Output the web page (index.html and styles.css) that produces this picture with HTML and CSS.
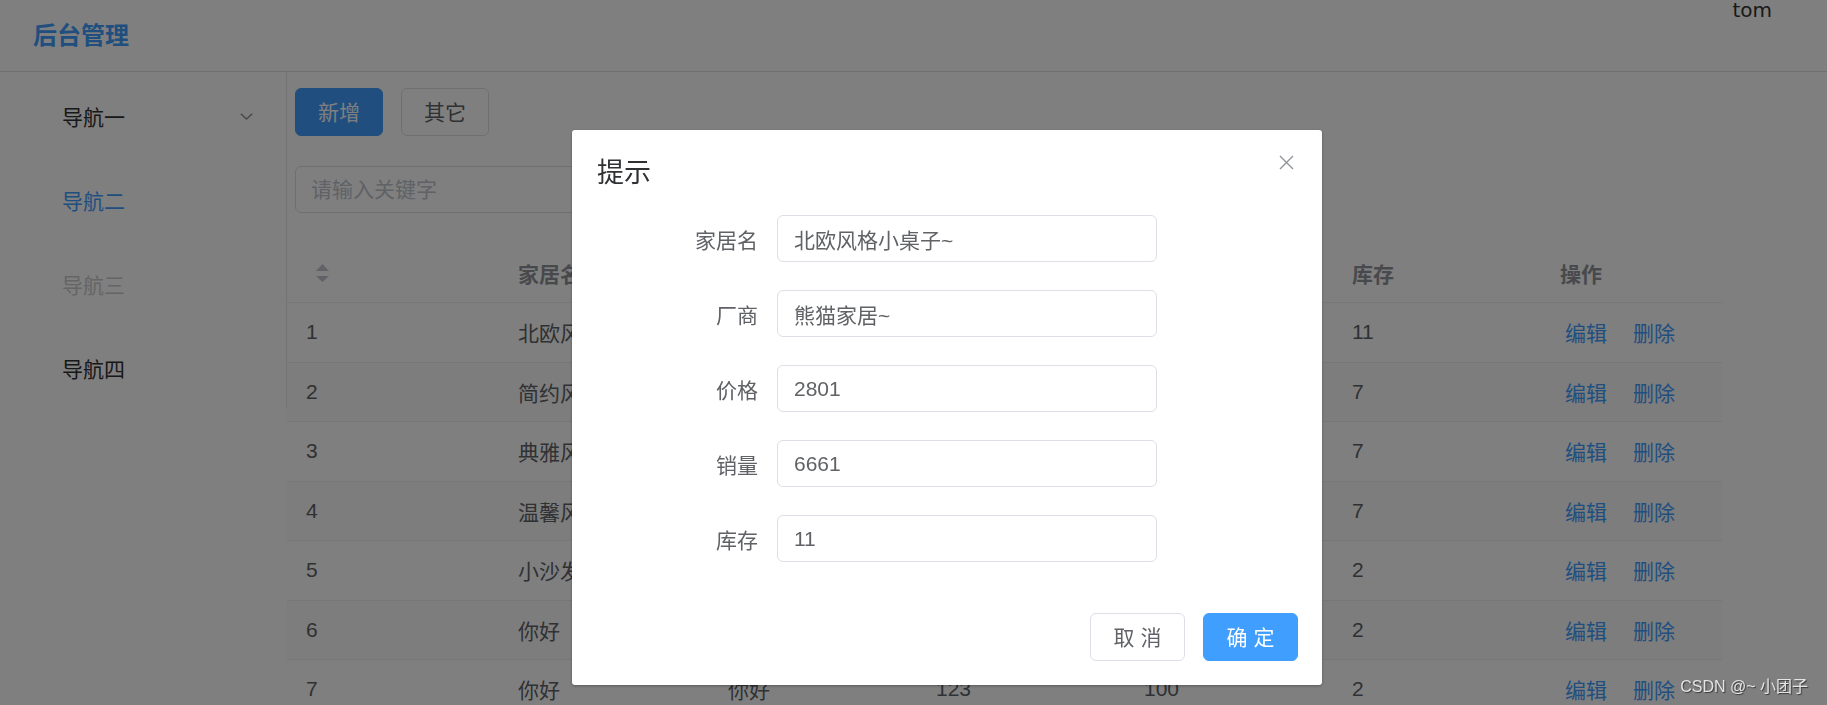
FILE: index.html
```html
<!DOCTYPE html>
<html lang="zh-CN">
<head>
<meta charset="utf-8">
<title>后台管理</title>
<link rel="stylesheet" href="styles.css">
</head>
<body>
<div class="app">
  <header class="topbar">
    <div class="logo">后台管理</div>
    <div class="user">tom</div>
  </header>
  <div class="layout">
    <aside class="aside">
      <ul class="menu">
        <li class="menu-item"><span class="menu-text">导航一</span>
          <svg class="chevron" width="13" height="7" viewBox="0 0 13 7"><polyline points="0.8,0.8 6.5,6 12.2,0.8" fill="none" stroke="#909399" stroke-width="1.5"/></svg>
        </li>
        <li class="menu-item active"><span class="menu-text">导航二</span></li>
        <li class="menu-item disabled"><span class="menu-text">导航三</span></li>
        <li class="menu-item"><span class="menu-text">导航四</span></li>
      </ul>
    </aside>
    <main class="main">
      <div class="toolbar">
        <button class="btn btn-primary">新增</button>
        <button class="btn">其它</button>
      </div>
      <div class="search"><input class="search-input" type="text" placeholder="请输入关键字"></div>
      <div class="table">
        <div class="tr th">
          <div class="cell"><svg class="sort" width="13" height="18" viewBox="0 0 13 18"><polygon points="0,7 6.5,0 13,7" fill="#c0c4cc"/><polygon points="0,12 6.5,18 13,12" fill="#c0c4cc"/></svg></div>
          <div class="cell">家居名</div>
          <div class="cell">厂商</div>
          <div class="cell">价格</div>
          <div class="cell">销量</div>
          <div class="cell">库存</div>
          <div class="cell">操作</div>
        </div>
        <div class="tr">
          <div class="cell">1</div><div class="cell">北欧风格小桌子~</div><div class="cell">熊猫家居~</div><div class="cell">2801</div><div class="cell">6661</div><div class="cell">11</div>
          <div class="cell ops"><span class="link">编辑</span><span class="link">删除</span></div>
        </div>
        <div class="tr striped">
          <div class="cell">2</div><div class="cell">简约风格沙发</div><div class="cell">熊猫家居</div><div class="cell">1999</div><div class="cell">320</div><div class="cell">7</div>
          <div class="cell ops"><span class="link">编辑</span><span class="link">删除</span></div>
        </div>
        <div class="tr">
          <div class="cell">3</div><div class="cell">典雅风格书柜</div><div class="cell">熊猫家居</div><div class="cell">1500</div><div class="cell">210</div><div class="cell">7</div>
          <div class="cell ops"><span class="link">编辑</span><span class="link">删除</span></div>
        </div>
        <div class="tr striped">
          <div class="cell">4</div><div class="cell">温馨风格床</div><div class="cell">熊猫家居</div><div class="cell">2300</div><div class="cell">150</div><div class="cell">7</div>
          <div class="cell ops"><span class="link">编辑</span><span class="link">删除</span></div>
        </div>
        <div class="tr">
          <div class="cell">5</div><div class="cell">小沙发</div><div class="cell">熊猫家居</div><div class="cell">800</div><div class="cell">90</div><div class="cell">2</div>
          <div class="cell ops"><span class="link">编辑</span><span class="link">删除</span></div>
        </div>
        <div class="tr striped">
          <div class="cell">6</div><div class="cell">你好</div><div class="cell">你好</div><div class="cell">123</div><div class="cell">100</div><div class="cell">2</div>
          <div class="cell ops"><span class="link">编辑</span><span class="link">删除</span></div>
        </div>
        <div class="tr">
          <div class="cell">7</div><div class="cell">你好</div><div class="cell">你好</div><div class="cell">123</div><div class="cell">100</div><div class="cell">2</div>
          <div class="cell ops"><span class="link">编辑</span><span class="link">删除</span></div>
        </div>
      </div>
    </main>
  </div>
</div>

<div class="overlay">
  <div class="dialog">
    <div class="dlg-header">
      <span class="dlg-title">提示</span>
      <svg class="dlg-close" width="15" height="15" viewBox="0 0 15 15"><path d="M1 1 L14 14 M14 1 L1 14" stroke="#909399" stroke-width="1.4" fill="none"/></svg>
    </div>
    <div class="dlg-body">
      <div class="form-row"><label class="form-label">家居名</label><input class="form-input" type="text" value="北欧风格小桌子~"></div>
      <div class="form-row"><label class="form-label">厂商</label><input class="form-input" type="text" value="熊猫家居~"></div>
      <div class="form-row"><label class="form-label">价格</label><input class="form-input" type="text" value="2801"></div>
      <div class="form-row"><label class="form-label">销量</label><input class="form-input" type="text" value="6661"></div>
      <div class="form-row"><label class="form-label">库存</label><input class="form-input" type="text" value="11"></div>
    </div>
    <div class="dlg-footer">
      <button class="btn btn-dlg">取 消</button>
      <button class="btn btn-dlg btn-primary">确 定</button>
    </div>
  </div>
</div>

<div class="watermark">CSDN @~ 小团子</div>
</body>
</html>
```

FILE: styles.css
```css
* { box-sizing: border-box; }
html, body { margin: 0; padding: 0; }
body {
  width: 1827px;
  height: 705px;
  overflow: hidden;
  background: #fff;
  color: #303133;
  font-family: "Liberation Sans", "Noto Sans CJK SC", sans-serif;
}

.topbar {
  height: 72px;
  border-bottom: 1px solid #dcdfe6;
  display: flex;
  align-items: center;
  padding-left: 33px;
}
.logo {
  font-size: 24px;
  font-weight: bold;
  line-height: 1;
  color: #409EFF;
}
.user {
  margin-left: auto;
  margin-right: 55px;
  align-self: flex-start;
  font-family: "DejaVu Sans", sans-serif;
  font-size: 20px;
  line-height: 20px;
  color: #333;
}

.layout { display: flex; }

.aside { width: 287px; flex: none; }
.menu {
  list-style: none;
  margin: 0;
  padding: 2px 0 0;
  height: 336px;
  border-right: 1px solid #e6e6e6;
}
.menu-item {
  height: 84px;
  display: flex;
  align-items: center;
  padding: 0 33px 0 62px;
  font-size: 21px;
  color: #303133;
}
.menu-text { flex: 1; }
.menu-item.active { color: #409EFF; }
.menu-item.disabled { opacity: .25; }

.main { flex: 1; padding-top: 16px; }
.toolbar { display: flex; gap: 18px; padding-left: 8px; }

.btn {
  font-family: inherit;
  font-size: 21px;
  line-height: 21px;
  height: 48px;
  padding: 0 22px;
  border: 1px solid #dcdfe6;
  border-radius: 6px;
  background: #fff;
  color: #606266;
}
.btn-primary { background: #409EFF; border-color: #409EFF; color: #fff; }

.search { margin: 30px 0 0 8px; }
.search-input {
  width: 450px;
  height: 47px;
  border: 1px solid #dcdfe6;
  border-radius: 6px;
  padding: 0 15px;
  font-family: inherit;
  font-size: 21px;
  color: #606266;
  outline: none;
}
.search-input::placeholder { color: #c0c4cc; }

.table { margin-top: 31px; width: 1435px; font-size: 21px; color: #606266; }
.tr {
  display: grid;
  grid-template-columns: 212px 210px 208px 208px 208px 208px 181px;
  align-items: center;
  height: 59.5px;
  border-bottom: 1px solid #ebeef5;
}
.tr.th { height: 59px; color: #909399; font-weight: bold; }
.tr.striped { background: #fafafa; }
.cell { padding-left: 19px; white-space: nowrap; overflow: hidden; }
.sort { display: block; margin-left: 10px; }
.ops { padding-left: 24px; }
.link { color: #409EFF; margin-right: 26px; }

.overlay {
  position: fixed;
  inset: 0;
  background: rgba(0, 0, 0, .5);
  padding: 130px 0 0 572px;
}
.dialog {
  width: 750px;
  height: 555px;
  background: #fff;
  border-radius: 3px;
  box-shadow: 0 1px 3px rgba(0, 0, 0, .3);
  display: flex;
  flex-direction: column;
}
.dlg-header {
  display: flex;
  justify-content: space-between;
  align-items: flex-start;
  padding: 25px 28px 0 25px;
}
.dlg-title { font-size: 27px; line-height: 36px; color: #303133; }
.dlg-close { display: block; margin-top: 0; }

.dlg-body { margin-top: 24px; }
.form-row { display: flex; align-items: center; height: 47px; margin-bottom: 28px; }
.form-row:last-child { margin-bottom: 0; }
.form-label {
  width: 205px;
  padding-right: 19px;
  text-align: right;
  font-size: 21px;
  color: #606266;
}
.form-input {
  width: 380px;
  height: 47px;
  border: 1px solid #dcdfe6;
  border-radius: 6px;
  padding: 0 16px;
  font-family: inherit;
  font-size: 21px;
  color: #606266;
  outline: none;
}

.dlg-footer {
  display: flex;
  justify-content: flex-end;
  gap: 18px;
  margin-top: 51px;
  padding-right: 24px;
}
.btn-dlg { width: 95px; padding: 0; }

.watermark {
  position: fixed;
  right: 19px;
  bottom: 9px;
  font-size: 16px;
  line-height: 18px;
  color: #e4e4e4;
  text-shadow: 1px 1px 1px rgba(0, 0, 0, .55);
  font-family: "Liberation Sans", "Noto Sans CJK SC", sans-serif;
}
```
